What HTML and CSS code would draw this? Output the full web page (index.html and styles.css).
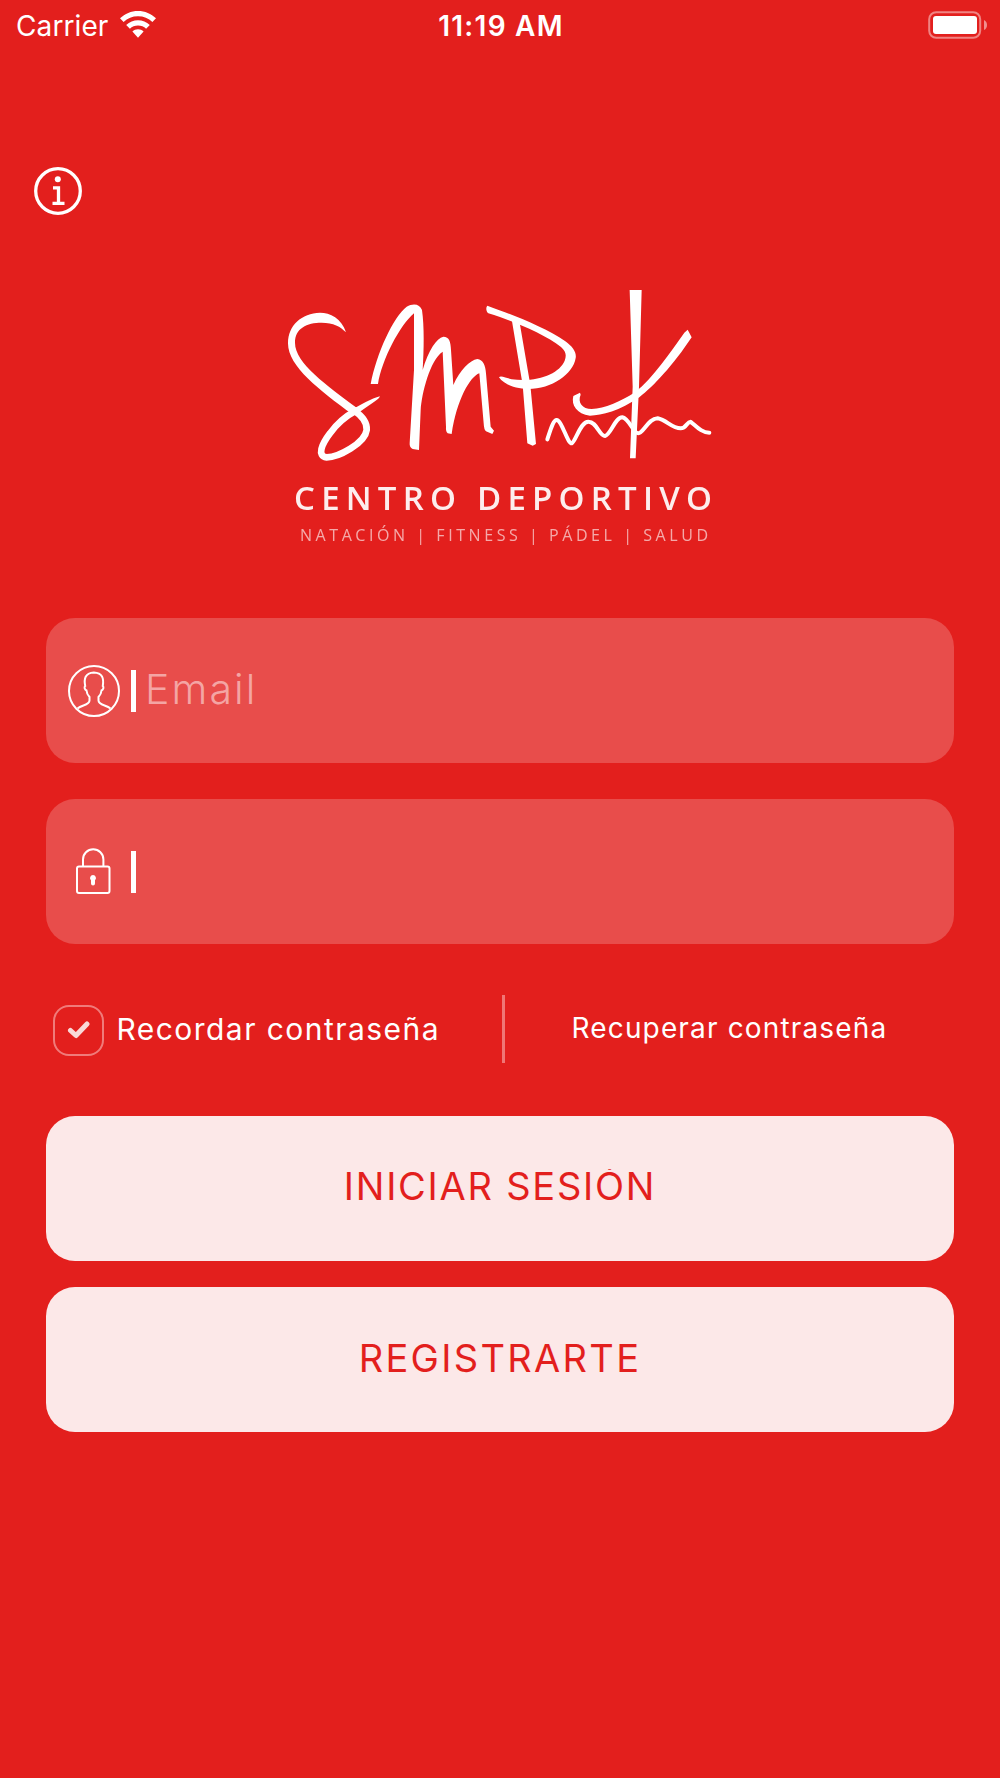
FILE: index.html
```html
<!DOCTYPE html>
<html lang="es">
<head>
<meta charset="utf-8">
<title>SMPK Centro Deportivo</title>
<link rel="stylesheet" href="styles.css">
</head>
<body>
<header class="status">
  <div class="carrier"><span>Carrier</span>
    <svg class="wifi" viewBox="0 0 36 28"><path d="M18 0C11 0 5 2.600 0 7.300L3.600 11C7.500 7.300 12.400 5.300 18 5.300S28.500 7.300 32.400 11L36 7.300C31 2.600 25 0 18 0Z"/><path d="M18 9.300C13.500 9.300 9.500 11 6.200 14L9.900 17.700C12 15.700 14.900 14.500 18 14.500S24 15.700 26.100 17.700L29.800 14C26.500 11 22.500 9.300 18 9.300Z"/><path d="M18 18.300C15.800 18.300 14 19.200 12.400 20.500L18 26.700L23.600 20.500C22 19.200 20.200 18.300 18 18.300Z"/></svg>
  </div>
  <div class="time">11:19 AM</div>
  <svg class="battery" viewBox="0 0 60 28"><rect x="1.200" y="1.200" width="51" height="25.600" rx="7" fill="none" stroke="#fff" stroke-opacity=".45" stroke-width="2"/><rect x="5" y="5" width="44" height="18" rx="3" fill="#fff"/><path d="M56 9Q59 10.500 59 14T56 19Z" fill="#fff" fill-opacity=".5"/></svg>
</header>

<svg class="info" viewBox="0 0 48 48"><circle cx="24" cy="24" r="22.300"/><path d="M19 20.800H24.500V36.300M18.500 36.300H30.500"/><circle class="dot" cx="23.800" cy="12.300" r="3"/></svg>

<svg class="logo" viewBox="288 290 426 260">
  <g transform="translate(270 270) scale(.33333)">
    <path d="M228 187C215 145 180 128 150 128C95 130 54 165 54 220C54 290 150 360 245 432L262 415C170 345 75 280 75 218C75 175 110 158 155 158C190 158 212 170 228 187Z"/>
    <path class="pen" stroke-width="20" d="M250 420C280 440 292 460 290 480C285 520 205 562 170 562C140 558 155 523 180 490C200 462 230 437 258 422"/>
    <path d="M245 420C270 405 305 385 330 379C325 392 295 405 262 432Z"/>
    <path d="M302 342C320 250 370 140 410 110C430 98 450 102 456 120C463 170 462 240 458 300C475 240 500 205 520 200C538 200 542 215 543 240L550 345C570 300 600 270 622 267C640 270 646 285 648 310L662 470L672 482L667 492L648 484Q642 480 641 460L628 310C600 320 560 390 545 492L533 490Q527 485 528 470L518 245C480 270 455 370 452 420L447 540L428 537Q418 532 419 520L432 300L432 130C390 165 335 270 324 342Z"/>
  </g>
  <g transform="translate(490 270) scale(.33333)">
    <path d="M-8 107C70 135 170 175 225 213C250 231 260 248 257 264C250 312 185 357 115 357C75 357 40 342 27 322C32 316 45 323 65 328C145 338 208 310 224 272C230 255 228 245 213 231C165 193 70 153 -5 130C-12 124 -13 112 -8 107Z"/>
    <path d="M65 148L89 158L121 345L138 522L128 527L112 520L98 345Z"/>
    <path d="M419 60H455L447 350L437 565H420L428 350Z"/>
    <path d="M593 179L605 202C550 285 490 350 448 382C390 422 335 437 300 437C260 432 243 405 250 378L270 368L272 374C262 397 277 417 305 417C345 417 390 395 435 367C490 323 540 248 583 188Z"/>
    <path class="pen" stroke-width="12" d="M172 508C180 485 189 450 200 450C215 450 232 520 245 520C257 515 271 455 295 455C320 455 328 498 345 498C362 495 375 442 397 442C417 445 430 490 445 490C460 490 475 445 503 445C530 450 545 475 572 475C590 475 590 455 602 455C620 470 635 488 658 488"/>
  </g>
  <text x="294" y="509.500" class="name" textLength="418">CENTRO DEPORTIVO</text>
  <text x="300" y="540.500" class="tagline" textLength="408">NATACIÓN | FITNESS | PÁDEL | SALUD</text>
</svg>

<main class="form">
  <div class="field">
    <svg class="user" viewBox="0 0 52 52"><circle cx="26" cy="26" r="25"/><path d="M9.500 43.500C14 40 21.500 40 21.500 35.500V32C19.500 30 18.700 28 18.500 25.500C16.500 24.500 16 22 17.200 21C15.800 14 17 8 25.800 7.500C34.500 8 36 13 34.800 21C36 22 35.500 24.500 33.500 25.500C33.300 28 32.500 30 30.500 32V35.500C30.500 40 38 40 42.500 43.500"/></svg>
    <i class="caret"></i><span class="placeholder">Email</span>
  </div>
  <div class="field">
    <svg class="lock" viewBox="0 0 52 52"><rect x="9" y="20.500" width="32.500" height="26.500" rx="2"/><path d="M15 20.500V13.500A10.200 10.200 0 0 1 35.400 13.500V20.500"/><path class="key" d="M25 29a3 3 0 0 1 2 5.200V37.500a2 2 0 0 1-4 0v-3.300a3 3 0 0 1 2-5.200z"/></svg>
    <i class="caret"></i>
  </div>
  <div class="options">
    <div class="remember">
      <span class="check"><svg viewBox="0 0 24 20"><path d="M3.500 10.500L9 15.500L20 4"/></svg></span>
      <span class="remember-text">Recordar contraseña</span>
    </div>
    <i class="rule"></i>
    <span class="recover">Recuperar contraseña</span>
  </div>
  <div class="button login"><span>INICIAR SESIÓN</span></div>
  <div class="button register"><span>REGISTRARTE</span></div>
</main>
</body>
</html>
```
FILE: styles.css
```css
* { box-sizing: border-box; }
body {
  margin: 0;
  width: 1000px;
  height: 1778px;
  overflow: hidden;
  display: flex;
  flex-direction: column;
  background: #e31f1d;
  color: #fff;
  font-family: Inter, "Liberation Sans", sans-serif;
}
svg { display: block; flex: none; }
.status {
  display: grid;
  grid-template-columns: 1fr auto 1fr;
  align-items: center;
  height: 50px;
  padding: 0 12px 0 16px;
  font-size: 28px;
  line-height: 52px;
}
.carrier { display: flex; gap: 12px; letter-spacing: .1px; }
.wifi { width: 36px; height: 28px; margin-top: 11px; fill: #fff; }
.time { margin-right: 2px; font-weight: 600; letter-spacing: 1.250px; }
.battery { width: 60px; height: 28px; justify-self: end; margin-bottom: 3px; }
.info {
  width: 48px;
  height: 48px;
  margin: 116.500px 0 0 33.500px;
  fill: none;
  stroke: #fff;
  stroke-width: 3.300;
}
.info .dot { fill: #fff; stroke: none; }
.logo { width: 426px; height: 260px; margin: 75px 0 0 288px; fill: #fff; filter: blur(.6px); }
.pen { fill: none; stroke: #fff; stroke-linecap: round; stroke-linejoin: round; }
.name { font: 600 33px "Open Sans", sans-serif; fill-opacity: .92; }
.tagline { font: 400 16px "Open Sans", sans-serif; fill-opacity: .62; }
.form { display: flex; flex-direction: column; margin: 68.500px 46px 0; }
.field {
  display: flex;
  align-items: center;
  height: 145px;
  margin-bottom: 36px;
  padding-left: 22px;
  border-radius: 29px;
  background: #e84d4b;
}
.user, .lock { width: 52px; height: 52px; fill: none; stroke: #fff; stroke-width: 2; }
.lock .key { fill: #fff; stroke: none; }
.caret { width: 5px; height: 42px; margin-left: 11px; background: #fff; }
.placeholder { margin: 0 0 3px 9px; font-size: 41px; font-weight: 300; color: #f4a5a4; letter-spacing: 2.100px; }
.options { display: flex; height: 68px; margin: 14.500px 0 53px; }
.remember { display: flex; align-items: center; width: 456px; padding: 3px 0 0 7px; }
.check {
  display: flex;
  align-items: center;
  justify-content: center;
  width: 51px;
  height: 51px;
  border: 2px solid #f07b7a;
  border-radius: 16px;
}
.check svg { width: 24px; height: 20px; fill: none; stroke: #f9d9d8; stroke-width: 5; stroke-linecap: round; stroke-linejoin: round; }
.remember-text { margin: 0 0 2px 12.500px; font-size: 30px; letter-spacing: 1.450px; white-space: nowrap; }
.rule { width: 3px; background: #f07675; }
.recover { margin: 16px 0 0 66.500px; font-size: 28px; line-height: 34px; letter-spacing: 1.150px; white-space: nowrap; }
.button {
  display: flex;
  align-items: center;
  justify-content: center;
  height: 145px;
  border-radius: 29px;
  background: #fce8e8;
  color: #e31f1d;
  font-size: 38px;
  line-height: 46px;
}
.button span { margin-bottom: 4px; white-space: nowrap; }
.login { margin-bottom: 26.500px; }
.login span { letter-spacing: 1.750px; clip-path: inset(6px 0 0 0); }
.register span { letter-spacing: 2.300px; }
```
